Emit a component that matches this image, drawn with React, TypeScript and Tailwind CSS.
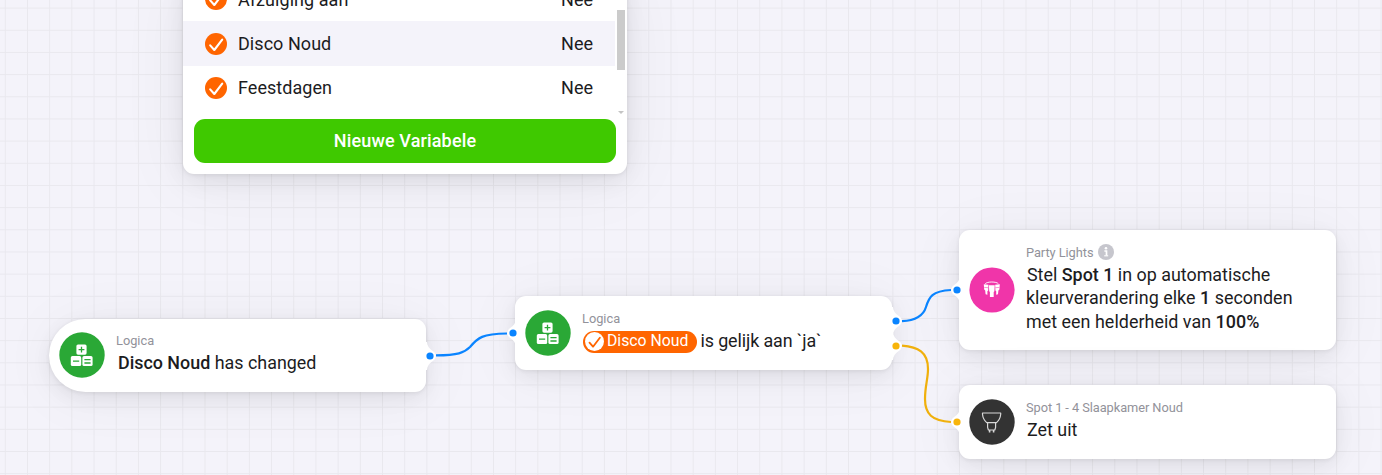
import React from 'react';
import clsx from 'clsx';

type PortColor = 'blue' | 'yellow';

interface PortProps {
  side: 'left' | 'right';
  color: PortColor;
  className: string;
}

interface FlowCardProps {
  className: string;
  icon: React.ReactNode;
  label: React.ReactNode;
  children: React.ReactNode;
  ports: PortProps[];
}

const VARIABLES = [
  { name: 'Afzuiging aan', value: 'Nee' },
  { name: 'Disco Noud', value: 'Nee', active: true },
  { name: 'Feestdagen', value: 'Nee' },
];

function CheckIcon({ inverted = false, className }: { inverted?: boolean; className?: string }) {
  return (
    <svg viewBox="0 0 22 22" className={className}>
      <circle cx="11" cy="11" r="11" fill={inverted ? '#fff' : '#ff6500'} />
      <path
        d="M5.2 12.4 L9.3 17 L17.2 6.6"
        fill="none"
        stroke={inverted ? '#ff6500' : '#fff'}
        strokeWidth="2.1"
        strokeLinecap="round"
        strokeLinejoin="round"
      />
    </svg>
  );
}

function LogicIcon() {
  return (
    <svg viewBox="0 0 46 46" className="size-[46px] shrink-0">
      <circle cx="23" cy="23" r="22.7" fill="#2aa836" />
      <g fill="#fff">
        <rect x="17.4" y="12.5" width="10.2" height="10.2" rx="1.6" />
        <rect x="11.8" y="24.1" width="10.4" height="10" rx="1.6" />
        <rect x="23.4" y="24.1" width="10.2" height="10" rx="1.6" />
      </g>
      <g stroke="#2aa836" strokeWidth="1.3">
        <path d="M19.6 17.6h5.8M22.5 14.7v5.8M14 29.2h6.2M25.4 27.6h6.2M25.4 31h6.2" />
      </g>
    </svg>
  );
}

function PartyIcon() {
  return (
    <svg viewBox="0 0 46 46" className="size-[46px] shrink-0">
      <circle cx="23" cy="23" r="22.6" fill="#f035a9" />
      <path d="M16.2 16.8 C18 14.4 27.6 14.4 29.4 16.8" fill="none" stroke="#fff" strokeWidth=".9" />
      <g fill="#fff">
        <path d="M14.8 17.2 l4.6 .6 -.2 5.6 -.8 .8 v3.6 l-1.8 -.6 -.4 -3.6 -1 -1z" />
        <path d="M30.8 17.2 l-4.6 .6 .2 5.6 .8 .8 v3.6 l1.8 -.6 .4 -3.6 1 -1z" />
        <path d="M19.9 18.2 h5.8 l-.3 6 -.7 .9 v4.8 h-3.8 v-4.8 l-.7 -.9z" />
      </g>
      <path d="M15.2 20.4l4 .3M30.4 20.4l-4 .3" stroke="#f035a9" strokeWidth=".5" />
    </svg>
  );
}

function SpotIcon() {
  return (
    <svg viewBox="0 0 46 46" className="size-[46px] shrink-0">
      <circle cx="23" cy="23" r="22.7" fill="#333" />
      <g fill="none" stroke="#d8d8d8" strokeWidth="1.2" strokeLinejoin="round">
        <path d="M13.5 14 h18.2 v1.2 c-.3 3.4 -1.8 6.2 -4.2 8.4 h-9.8 c-2.4 -2.2 -3.9 -5 -4.2 -8.4z" />
        <path d="M18.6 23.8 v4.6 l.8 2.6 h6.4 l.8 -2.6 v-4.6" />
        <path d="M20.6 31v2.6M24.6 31v2.6" strokeWidth="1.6" />
      </g>
    </svg>
  );
}

function InfoIcon() {
  return (
    <svg viewBox="0 0 16 16" className="size-4">
      <circle cx="8" cy="8" r="8" fill="#c6c6cd" />
      <circle cx="8" cy="4.3" r="1.3" fill="#fff" />
      <path d="M6.4 7h2.1v4.6" fill="none" stroke="#fff" strokeWidth="1.7" />
      <path d="M6.2 11.8h4" stroke="#fff" strokeWidth="1.1" />
    </svg>
  );
}

/* Bump on the edge of a card with the connection dot in it */
function Port({ side, color, className }: PortProps) {
  return (
    <svg
      viewBox="0 0 12 28"
      className={clsx('absolute h-7 w-3', side === 'left' ? 'left-[-9px]' : 'right-[-10.4px] -scale-x-100', className)}
    >
      <path d="M12 0 H10 C9.8 4.2 7.5 6.8 4.2 9 C.2 11.6 .2 16.4 4.2 19 C7.5 21.2 9.8 23.8 10 28 H12z" fill="#fff" />
      <circle cx="7" cy="14" r="3.6" fill={color === 'blue' ? '#0a84ff' : '#f7b40a'} />
    </svg>
  );
}

function FlowCard({ className, icon, label, children, ports }: FlowCardProps) {
  return (
    <div
      className={clsx(
        'absolute flex w-[377.4px] items-center bg-white pl-[10.4px] shadow-[0_1px_4px_rgba(0,0,0,0.07),0_6px_20px_rgba(0,0,0,0.07),0_4px_60px_rgba(0,0,0,0.05)]',
        className,
      )}
    >
      {ports.map((port, index) => (
        <Port key={index} {...port} />
      ))}
      {icon}
      <div className="ml-[10.6px] pb-[2.5px]">
        <div className="flex h-[18px] items-center text-[12.8px] text-[#92929a]">
          <span className="relative top-[-1.2px]">{label}</span>
        </div>
        <div className="text-[17.9px] leading-[23.5px] whitespace-nowrap text-[#1c1c1e]">{children}</div>
      </div>
    </div>
  );
}

function VariablePanel() {
  return (
    <div className="absolute top-[-23px] left-[183px] w-[444px] rounded-b-[11px] bg-white pb-[11px] shadow-[0_1px_4px_rgba(0,0,0,0.08),0_6px_24px_rgba(0,0,0,0.08),0_6px_70px_rgba(0,0,0,0.06)]">
      <div className="flex h-[142px]">
        <ul className="w-[432px]">
          {VARIABLES.map((variable) => (
            <li
              key={variable.name}
              className={clsx(
                'flex h-[44.4px] items-center pr-[22px] pl-[22px] text-[18px] text-[#1c1c1e]',
                variable.active && 'bg-[#f4f3fa]',
              )}
            >
              <CheckIcon className="size-[22px]" />
              <span className="ml-[11px] flex-1 tracking-[0.05px]">{variable.name}</span>
              <span>{variable.value}</span>
            </li>
          ))}
        </ul>
        {/* Scrollbar */}
        <div className="flex flex-1 flex-col items-center justify-between pt-[33px] pb-[5px]">
          <div className="h-[60px] w-2 bg-[#cbcbcb]" />
          <svg viewBox="0 0 6 3" className="h-[3px] w-[6px]">
            <path d="M0 0h6L3 3z" fill="#c4c4c4" />
          </svg>
        </div>
      </div>
      <button className="mx-[11px] block h-11 w-[422px] rounded-[11px] bg-[#3fc900] pb-[2px] text-[18px] font-medium tracking-[0.15px] text-white">
        Nieuwe Variabele
      </button>
    </div>
  );
}

export default function App() {
  return (
    <div className="relative h-[475px] w-[1382px] overflow-hidden bg-[#f4f3fa] font-['Roboto',sans-serif]">
      {/* Canvas grid */}
      <svg className="absolute inset-0 size-full">
        <defs>
          <pattern id="grid" x="4.8" y="7.6" width="22.19" height="22.17" patternUnits="userSpaceOnUse">
            <path d="M.5 0V22.17M0 .5H22.19" stroke="#e9e8ee" strokeWidth="1" />
          </pattern>
        </defs>
        <rect width="100%" height="100%" fill="url(#grid)" />
      </svg>

      <VariablePanel />

      <FlowCard
        className="top-[318.5px] left-[49px] h-[73px] rounded-l-[36.5px] rounded-r-[11px]"
        icon={<LogicIcon />}
        label="Logica"
        ports={[{ side: 'right', color: 'blue', className: 'top-[23px]' }]}
      >
        <span className="ml-[2px] font-medium">Disco Noud</span> has changed
      </FlowCard>

      <FlowCard
        className="top-[296px] left-[515px] h-[73.5px] rounded-[11px]"
        icon={<LogicIcon />}
        label="Logica"
        ports={[
          { side: 'left', color: 'blue', className: 'top-[23.3px]' },
          { side: 'right', color: 'blue', className: 'top-[11.3px]' },
          { side: 'right', color: 'yellow', className: 'top-[35.5px]' },
        ]}
      >
        <span className="flex items-center">
          <span className="relative top-[1px] mr-[3px] ml-[1px] flex h-[22px] items-center rounded-full bg-[#ff6500] pr-[9px] pl-[2px] text-[15.8px] text-white">
            <CheckIcon inverted className="mr-[3px] size-[19px]" />
            <span className="relative top-[-0.5px]">Disco Noud</span>
          </span>
          <span className="tracking-[-0.1px]">is gelijk aan `ja`</span>
        </span>
      </FlowCard>

      <FlowCard
        className="top-[230px] left-[959px] h-[120px] rounded-[11px]"
        icon={<PartyIcon />}
        label={
          <span className="flex items-center gap-[5px] tracking-[-0.05px]">
            Party Lights <InfoIcon />
          </span>
        }
        ports={[{ side: 'left', color: 'blue', className: 'top-[46px]' }]}
      >
        <span className="ml-[1px]">Stel</span> <span className="font-medium">Spot 1</span> in op automatische
        <br />
        <span className="tracking-[0.03px]">
          kleurverandering elke <span className="font-medium">1</span> seconden
        </span>
        <br />
        <span className="tracking-[0.03px]">
          met een helderheid van <span className="font-medium">100%</span>
        </span>
      </FlowCard>

      <FlowCard
        className="top-[385px] left-[959px] h-[73.5px] rounded-[11px]"
        icon={<SpotIcon />}
        label={<span className="tracking-[-0.06px]">Spot 1 - 4 Slaapkamer Noud</span>}
        ports={[{ side: 'left', color: 'yellow', className: 'top-[23px]' }]}
      >
        <span className="ml-[1px]">Zet uit</span>
      </FlowCard>

      {/* Connections */}
      <svg className="absolute inset-0 size-full" fill="none" strokeWidth="2.2">
        <path d="M436 355.4 C458 355.2 464 353 470 347 C478 337.5 482 334 507 333.5" stroke="#0a84ff" />
        <path d="M902 321.2 C914 320.6 923 317 926 307 C929 297 932 291 951 290" stroke="#0a84ff" />
        <path d="M902 345.6 C918 347 928 352 928 369 C928 379 925 386 925 399 C925 414 932 421 951 422" stroke="#f0b00c" />
      </svg>
    </div>
  );
}
